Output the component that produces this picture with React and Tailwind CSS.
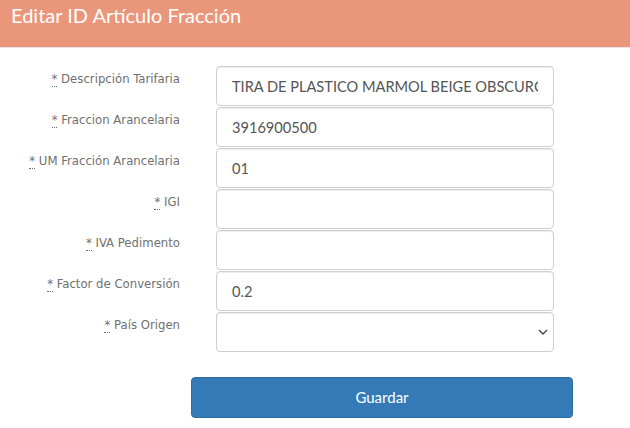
const fields = [
  { label: 'Descripción Tarifaria', value: 'TIRA DE PLASTICO MARMOL BEIGE OBSCURO' },
  { label: 'Fraccion Arancelaria', value: '3916900500' },
  { label: 'UM Fracción Arancelaria', value: '01' },
  { label: 'IGI', value: '' },
  { label: 'IVA Pedimento', value: '' },
  { label: 'Factor de Conversión', value: '0.2' },
]

const inputCls =
  'h-[40px] w-[338px] rounded-[4px] border border-[#cfcfcf] bg-white px-[15px] text-[14.6px] text-[#555] shadow-[inset_0_1px_1px_rgba(0,0,0,0.075)] outline-none'

function Label({ text }) {
  return (
    <label className="w-[180px] pt-[3px] text-right text-[13px] leading-[20px] text-[#707070] [font-family:'DejaVu_Sans_Condensed','Liberation_Sans',sans-serif]">
      <abbr className="border-b border-dotted border-[#707070] [text-decoration:none]">*</abbr> {text}
    </label>
  )
}

export default function App() {
  return (
    <div className="h-[428px] w-[630px] overflow-hidden bg-white [font-family:Lato,'Liberation_Sans',sans-serif]">
      <div className="h-[48px] border-b border-[#e5e5e5] bg-[#e9967a] px-[11px] pt-[2px]">
        <h4 className="text-[20px] leading-[26px] text-white">Editar ID Artículo Fracción</h4>
      </div>
      <form className="flex flex-col gap-[1px] pt-[18px]">
        {fields.map((f) => (
          <div key={f.label} className="flex items-start gap-[36px]">
            <Label text={f.label} />
            <input readOnly value={f.value} className={inputCls} />
          </div>
        ))}
        <div className="flex items-start gap-[36px]">
          <Label text="País Origen" />
          <div className="relative">
            <select className={`${inputCls} appearance-none`}>
              <option></option>
            </select>
            <svg className="pointer-events-none absolute right-[5px] top-[14px]" width="12" height="12" viewBox="0 0 12 12" fill="none" stroke="#444" strokeWidth="1.4">
              <path d="M2 4l4 4 4-4" />
            </svg>
          </div>
        </div>
        <div className="pl-[191px] pt-[24px]">
          <button type="button" className="h-[41px] w-[382px] rounded-[4px] border border-[#2e6da4] bg-[#337ab7] text-[15px] text-white">
            Guardar
          </button>
        </div>
      </form>
    </div>
  )
}
